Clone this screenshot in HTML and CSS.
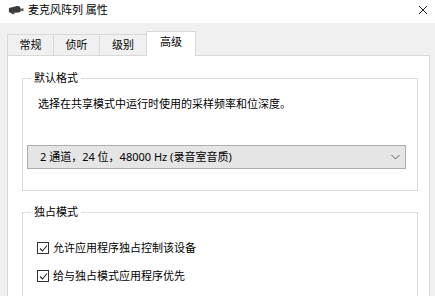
FILE: index.html
```html
<!doctype html>
<html>
<head>
<meta charset="UTF-8">
<title>麦克风阵列 属性</title>
<link rel="stylesheet" href="styles.css">
</head>
<body>

  <header class="titlebar">
    <svg class="app-icon" width="16" height="10" viewBox="0 0 16 10">
      <path d="M1 3 L9 1 Q12 0.5 12.5 3 L13 5 Q13 7 10.5 7.5 L3 8 Q1 8 0.8 6 Z" fill="#3b3b3b"/>
      <path d="M12 4 L15.5 3.2 L15.5 6.2 L12.5 5.8 Z" fill="#5a5a5a"/>
      <path d="M3 8 L5 9.5 L7 8 Z" fill="#3b3b3b"/>
    </svg>
    <span class="title">麦克风阵列 属性</span>
    <svg class="close" width="10" height="10" viewBox="0 0 10 10">
      <path d="M1 1 L9 9 M9 1 L1 9" stroke="#222" stroke-width="1"/>
    </svg>
  </header>

  <nav class="tabs">
    <div class="tab">常规</div>
    <div class="tab">侦听</div>
    <div class="tab">级别</div>
    <div class="tab active">高级</div>
  </nav>

  <main class="page">

    <fieldset class="group">
      <legend>默认格式</legend>
      <p class="desc">选择在共享模式中运行时使用的采样频率和位深度。</p>
      <div class="dropdown">
        <span>2 通道，24 位，48000 Hz (录音室音质)</span>
        <svg width="9" height="6" viewBox="0 0 9 6">
          <path d="M0.5 1 L4.5 5 L8.5 1" fill="none" stroke="#606060" stroke-width="1"/>
        </svg>
      </div>
    </fieldset>

    <fieldset class="group">
      <legend>独占模式</legend>
      <label class="check">
        <span class="box"><svg width="9" height="9" viewBox="0 0 9 9"><path d="M1 4.5 L3.5 7 L8 1.5" fill="none" stroke="#222" stroke-width="1.1"/></svg></span>
        允许应用程序独占控制该设备
      </label>
      <label class="check">
        <span class="box"><svg width="9" height="9" viewBox="0 0 9 9"><path d="M1 4.5 L3.5 7 L8 1.5" fill="none" stroke="#222" stroke-width="1.1"/></svg></span>
        给与独占模式应用程序优先
      </label>
    </fieldset>

  </main>

</body>
</html>
```

FILE: styles.css
```css
html, body {
  margin: 0;
  height: 100%;
  overflow: hidden;
}

body {
  background: #f0f0f0;
  font-family: "Noto Sans", "Noto Sans CJK SC", sans-serif;
  font-size: 11px;
  line-height: 16px;
  color: #000;
}

/* title bar */
.titlebar {
  display: flex;
  align-items: center;
  height: 23px;
  background: #fff;
  padding: 0 7px 4px 8px;
  box-sizing: border-box;
}
.app-icon {
  margin-right: 4px;
}
.title {
  flex: 1;
}

/* tabs */
.tabs {
  display: flex;
  align-items: flex-end;
  height: 32px;
  padding-left: 7px;
  position: relative;
  z-index: 1;
}
.tab {
  height: 20px;
  border: 1px solid #d9d9d9;
  border-bottom: none;
  margin-right: -1px;
  text-align: center;
  line-height: 20px;
  width: 45px;
  background: #f0f0f0;
}
.tab:nth-child(3) {
  width: 46px;
}
.tab.active {
  width: 48px;
  height: 24px;
  background: #fff;
  margin-bottom: -1px;
}

/* tab page */
.page {
  background: #fff;
  border: 1px solid #d9d9d9;
  border-bottom: none;
  margin: 0 5px 0 7px;
  padding: 0 11px 0 14px;
  height: 240px;
  overflow: hidden;
}

.group {
  border: 1px solid #dcdcdc;
  margin: 14px 0 0 0;
  padding: 10px 11px 21px 4px;
  min-width: 0;
}
.group + .group {
  margin-top: 13px;
  padding-top: 20px;
  padding-bottom: 0;
  border-bottom: none;
}
.group legend {
  padding: 0 3px;
  margin-left: 4px;
  line-height: 16px;
}

.desc {
  margin: 0 0 33px 0;
  padding-left: 11px;
}

.dropdown {
  display: flex;
  align-items: center;
  justify-content: space-between;
  height: 22px;
  background: #e5e5e5;
  border: 1px solid #adadad;
  padding: 0 5px 0 12px;
}

.check {
  display: flex;
  align-items: center;
  padding-left: 10px;
  margin-bottom: 12px;
}
.box {
  display: flex;
  align-items: center;
  justify-content: center;
  width: 10px;
  height: 10px;
  border: 1px solid #333;
  margin-right: 4px;
  background: #fff;
}
```
